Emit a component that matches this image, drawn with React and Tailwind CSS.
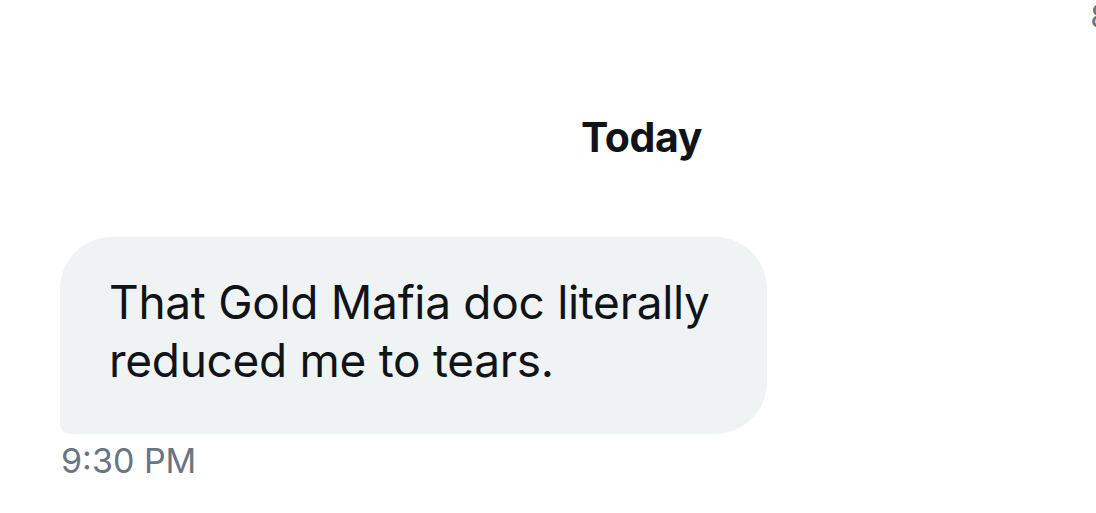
import React from 'react';

const font = { fontFamily: 'Inter, "Noto Sans", sans-serif' };

export default function App() {
  return (
    <div
      className="w-[1096px] h-[513px] overflow-hidden bg-white flex flex-col"
      style={font}
    >
      <div className="h-[40px] flex justify-end overflow-hidden">
        <span className="text-[32px] leading-[34px] text-[#687684] -mr-[14px]">8</span>
      </div>

      <div className="flex pl-[581px] pt-[72px]">
        <span className="text-[41px] leading-[50px] font-bold text-[#0f1419] tracking-[-0.4px]">Today</span>
      </div>

      <div className="flex flex-col items-start pl-[60px] pt-[75px]">
        <div className="w-[707px] h-[197px] bg-[#eff3f4] rounded-[52px] rounded-bl-[10px] px-[49px] pt-[36px]">
          <p className="text-[46px] leading-[58px] text-[#0f1419] tracking-[-0.3px]">
            That Gold Mafia doc literally
            <br />
            reduced me to tears.
          </p>
        </div>
        <span className="mt-[6px] pl-[1px] text-[34px] leading-[42px] text-[#687684]">9:30 PM</span>
      </div>
    </div>
  );
}
